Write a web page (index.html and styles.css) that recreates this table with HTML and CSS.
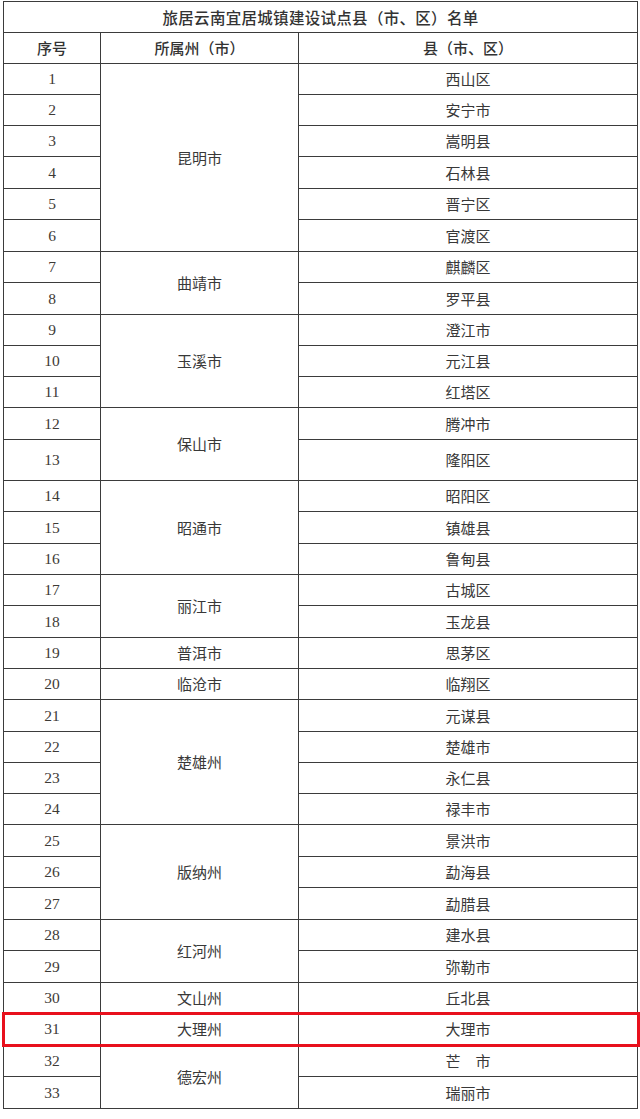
FILE: index.html
```html
<!DOCTYPE html>
<html lang="zh-CN">
<head>
<meta charset="utf-8">
<title>旅居云南宜居城镇建设试点县（市、区）名单</title>
<link rel="stylesheet" href="styles.css">
</head>
<body>
<table class="list">
<colgroup><col class="c1"><col class="c2"><col class="c3"></colgroup>
<thead>
<tr class="title"><th colspan="3">旅居云南宜居城镇建设试点县（市、区）名单</th></tr>
<tr class="head"><th>序号</th><th>所属州（市）</th><th>县（市、区）</th></tr>
</thead>
<tbody>
<tr><td class="n">1</td><td rowspan="6">昆明市</td><td>西山区</td></tr>
<tr><td class="n">2</td><td>安宁市</td></tr>
<tr><td class="n">3</td><td>嵩明县</td></tr>
<tr class="t"><td class="n">4</td><td>石林县</td></tr>
<tr><td class="n">5</td><td>晋宁区</td></tr>
<tr class="t"><td class="n">6</td><td>官渡区</td></tr>
<tr><td class="n">7</td><td rowspan="2">曲靖市</td><td>麒麟区</td></tr>
<tr class="t"><td class="n">8</td><td>罗平县</td></tr>
<tr><td class="n">9</td><td rowspan="3">玉溪市</td><td>澄江市</td></tr>
<tr><td class="n">10</td><td>元江县</td></tr>
<tr><td class="n">11</td><td>红塔区</td></tr>
<tr class="t"><td class="n">12</td><td rowspan="2">保山市</td><td>腾冲市</td></tr>
<tr class="x"><td class="n">13</td><td>隆阳区</td></tr>
<tr><td class="n">14</td><td rowspan="3">昭通市</td><td>昭阳区</td></tr>
<tr class="t"><td class="n">15</td><td>镇雄县</td></tr>
<tr><td class="n">16</td><td>鲁甸县</td></tr>
<tr><td class="n">17</td><td rowspan="2">丽江市</td><td>古城区</td></tr>
<tr class="t"><td class="n">18</td><td>玉龙县</td></tr>
<tr><td class="n">19</td><td>普洱市</td><td>思茅区</td></tr>
<tr><td class="n">20</td><td>临沧市</td><td>临翔区</td></tr>
<tr class="t"><td class="n">21</td><td rowspan="4">楚雄州</td><td>元谋县</td></tr>
<tr><td class="n">22</td><td>楚雄市</td></tr>
<tr><td class="n">23</td><td>永仁县</td></tr>
<tr><td class="n">24</td><td>禄丰市</td></tr>
<tr class="t"><td class="n">25</td><td rowspan="3">版纳州</td><td>景洪市</td></tr>
<tr><td class="n">26</td><td>勐海县</td></tr>
<tr class="t"><td class="n">27</td><td>勐腊县</td></tr>
<tr><td class="n">28</td><td rowspan="2">红河州</td><td>建水县</td></tr>
<tr class="t"><td class="n">29</td><td>弥勒市</td></tr>
<tr><td class="n">30</td><td>文山州</td><td>丘北县</td></tr>
<tr class="hl"><td class="n">31</td><td>大理州</td><td>大理市</td></tr>
<tr class="t"><td class="n">32</td><td rowspan="2">德宏州</td><td>芒　市</td></tr>
<tr class="t"><td class="n">33</td><td>瑞丽市</td></tr>
</tbody>
</table>
</body>
</html>
```

FILE: styles.css
```css
html, body {
  margin: 0;
  padding: 0;
  background: #ffffff;
}

body {
  padding: 1px 0 0 3px;
  font-family: "Noto Sans CJK SC", "Noto Sans", sans-serif;
  color: #383838;
}

.list {
  border-collapse: collapse;
  table-layout: fixed;
  width: 634px;
  border: 1.5px solid #3b3b3b;
}

.c1 { width: 97px; }
.c2 { width: 198px; }
.c3 { width: 339px; }

.list th,
.list td {
  border: 1px solid #3b3b3b;
  padding: 0;
  text-align: center;
  vertical-align: middle;
  font-size: 15px;
  line-height: 18px;
}

.list tr {
  height: 31px;
}

.list tr.t {
  height: 32px;
}

.list tr.x {
  height: 41px;
}

.list .title th {
  font-size: 15.5px;
  font-weight: 500;
  color: #333;
  letter-spacing: 0.3px;
}

.list .head th {
  font-weight: 500;
  color: #333;
}

.list td.n {
  font-family: "Liberation Serif", "Times New Roman", serif;
  font-size: 15.5px;
  color: #3d3a36;
}

.list tr.hl {
  outline: 3px solid #e8101c;
  outline-offset: -1px;
}
```
